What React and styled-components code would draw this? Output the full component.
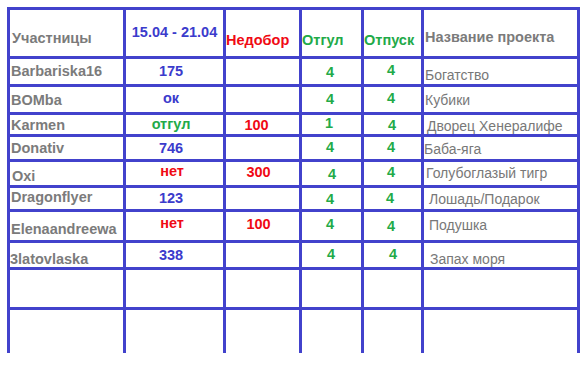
import React from 'react'
import styled, { createGlobalStyle, css } from 'styled-components'

const GlobalStyle = createGlobalStyle`
  html, body {
    margin: 0;
    padding: 0;
    background: #fff;
  }
`

const tones = {
  gray: css`color: #7b7b7b; font-weight: 700; font-size: 14.5px;`,
  blue: css`color: #3b3bcc; font-weight: 700; font-size: 14.5px;`,
  red: css`color: #f00a14; font-weight: 700; font-size: 14.5px;`,
  green: css`color: #22aa48; font-weight: 700; font-size: 14.5px;`,
  project: css`color: #787878; font-weight: 400; font-size: 14px;`,
}

const Page = styled.div`
  padding: 7px 0 0 7px;
`

const Table = styled.div`
  display: grid;
  grid-template-columns: 113px 97px 73px 59px 57px 153px;
  grid-template-rows: 46px 25px 25px 19px 22px 23px 21px 28px 24px 37px 43px;
  gap: 3px;
  padding: 3px 3px 0 3px;
  width: fit-content;
  background: #4242cc;
`

const Cell = styled.div`
  background: #fff;
  box-sizing: border-box;
  font-family: "Liberation Sans", Arial, sans-serif;
  line-height: 16px;
  white-space: nowrap;
  overflow: visible;
  text-align: ${({ $align }) => $align || 'left'};
  padding: ${({ $pt = 0 }) => $pt}px ${({ $pr = 0 }) => $pr}px 0 ${({ $pl = 0 }) => $pl}px;
  ${({ $tone }) => tones[$tone] || ''}
`

const name = (text, pt, pl = 1) => ({ text, tone: 'gray', pt, pl })
const value = (text, tone, pt, pr = 7) => ({ text, tone, pt, pr, align: 'center' })
const lack = (text, pt, pr = 8) => ({ text, tone: 'red', pt, pr, align: 'center' })
const four = (text, pt, pl) => ({ text, tone: 'green', pt, pl })
const project = (text, pt, pl) => ({ text, tone: 'project', pt, pl })
const empty = { text: '' }

const rows = [
  [
    { text: 'Участницы', tone: 'gray', pt: 20, pl: 2 },
    { text: '15.04 - 21.04', tone: 'blue', pt: 14, align: 'center' },
    { text: 'Недобор', tone: 'red', pt: 22, pl: 0 },
    { text: 'Отгул', tone: 'green', pt: 22, pl: 0 },
    { text: 'Отпуск', tone: 'green', pt: 22, pl: 0 },
    { text: 'Название проекта', tone: 'gray', pt: 19, pl: 1 },
  ],
  [name('Barbariska16', 4), value('175', 'blue', 4), empty, four('4', 5, 24), four('4', 3, 23), project('Богатство', 8, 1)],
  [name('BOMba', 5), value('ок', 'blue', 3), empty, four('4', 4, 24), four('4', 3, 23), project('Кубики', 5, 1)],
  [name('Karmen', 2), value('отгул', 'green', 1), lack('100', 2, 12), four('1', 0, 23), four('4', 2, 24), project('Дворец Хенералифе', 3, 3)],
  [name('Donativ', 3), value('746', 'blue', 3), empty, four('4', 2, 24), four('4', 2, 23), project('Баба-яга', 4, 0)],
  [name('Oxi', 6, 2), value('нет', 'red', 1, 5), lack('300', 2), four('4', 4, 26), four('4', 2, 23), project('Голубоглазый тигр', 3, 2)],
  [name('Dragonflyer', 1), value('123', 'blue', 2), empty, four('4', 3, 24), four('4', 2, 22), project('Лошадь/Подарок', 3, 5)],
  [name('Elenaandreewa', 9), value('нет', 'red', 3, 5), lack('100', 4), four('4', 4, 24), four('4', 6, 23), project('Подушка', 5, 5)],
  [name('3latovlaska', 8, 0), value('338', 'blue', 4), empty, four('4', 3, 25), four('4', 3, 25), project('Запах моря', 8, 6)],
  [empty, empty, empty, empty, empty, empty],
  [empty, empty, empty, empty, empty, empty],
]

export default function App() {
  return (
    <Page>
      <GlobalStyle />
      <Table>
        {rows.map((row, r) =>
          row.map((c, i) => (
            <Cell
              key={`${r}-${i}`}
              $tone={c.tone}
              $pt={c.pt}
              $pl={c.pl}
              $pr={c.pr}
              $align={c.align}
            >
              {c.text}
            </Cell>
          ))
        )}
      </Table>
    </Page>
  )
}
